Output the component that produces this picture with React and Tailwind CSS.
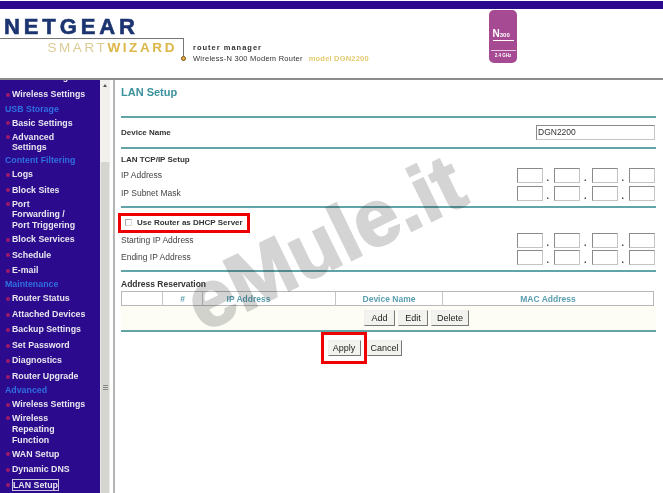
const font = "font-['Liberation_Sans',Arial,sans-serif]";

const menu = [
  { type: "item", label: "Wireless Settings" },
  { type: "head", label: "USB Storage" },
  { type: "item", label: "Basic Settings" },
  { type: "item", lines: ["Advanced", "Settings"] },
  { type: "head", label: "Content Filtering" },
  { type: "item", label: "Logs" },
  { type: "item", label: "Block Sites" },
  { type: "item", lines: ["Port", "Forwarding /", "Port Triggering"] },
  { type: "item", label: "Block Services" },
  { type: "item", label: "Schedule" },
  { type: "item", label: "E-mail" },
  { type: "head", label: "Maintenance" },
  { type: "item", label: "Router Status" },
  { type: "item", label: "Attached Devices" },
  { type: "item", label: "Backup Settings" },
  { type: "item", label: "Set Password" },
  { type: "item", label: "Diagnostics" },
  { type: "item", label: "Router Upgrade" },
  { type: "head", label: "Advanced" },
  { type: "item", label: "Wireless Settings" },
  { type: "item", lines: ["Wireless", "Repeating", "Function"] },
  { type: "item", label: "WAN Setup" },
  { type: "item", label: "Dynamic DNS" },
  { type: "item", label: "LAN Setup", active: true },
];

function Sidebar() {
  return (
    <div className="w-[100px] shrink-0 h-full bg-[#2c0a8e] overflow-hidden">
      <div className="mt-[-8px] pl-[12px] pr-[4px]">
        <div className="h-[15px] text-[8.8px] leading-[11px] font-bold text-[#e8e8f0]">ADSL Settings</div>
        {menu.map((m, i) =>
          m.type === "head" ? (
            <div key={i} className="h-[12.7px] -ml-[7px] text-[8.8px] leading-[12.7px] font-bold text-[#2f6fe0]">{m.label}</div>
          ) : m.lines ? (
            <div key={i} className="relative py-[1px] text-[8.8px] leading-[10.7px] font-bold text-[#e6e6ee]">
              <span className="absolute left-[-6px] top-[4px] w-[4px] h-[4px] rounded-full bg-[#a0186a]" />
              {m.lines.map((l) => <div key={l}>{l}</div>)}
            </div>
          ) : (
            <div key={i} className="relative h-[15.5px] py-[2.4px] text-[8.8px] leading-[10.7px] font-bold text-[#e6e6ee] whitespace-nowrap">
              <span className="absolute left-[-6px] top-[6px] w-[4px] h-[4px] rounded-full bg-[#a0186a]" />
              <span className={m.active ? "border border-[#c8c8d8]" : ""}>{m.label}</span>
            </div>
          )
        )}
      </div>
    </div>
  );
}

function Scrollbar() {
  return (
    <div className="w-[10px] shrink-0 h-full bg-[#f1f0ec] flex flex-col items-center">
      <div className="mt-[4px] w-0 h-0 border-x-[2.5px] border-x-transparent border-b-[3px] border-b-[#555]" />
      <div className="mt-[75px] w-full flex-1 bg-[#d6d6d0] border-x border-[#e8e8e4] flex items-center justify-center">
        <div className="flex flex-col gap-[1px] mt-[120px]">
          <div className="w-[5px] h-px bg-[#888]" />
          <div className="w-[5px] h-px bg-[#888]" />
          <div className="w-[5px] h-px bg-[#888]" />
        </div>
      </div>
    </div>
  );
}

function Hr() {
  return <div className="h-[2px] bg-[#4f9a9e] opacity-90" />;
}

function IpBox() {
  return <div className="w-[26px] h-[15px] bg-white border border-[#c4c4c4] border-t-[#8a8a8a] border-l-[#8a8a8a]" />;
}

function IpInput() {
  return (
    <div className="flex items-end gap-[4px] mr-[1px]">
      {[0, 1, 2, 3].map((n) => (
        <div key={n} className="flex items-end gap-[4px]">
          {n > 0 && <span className="text-[9px] leading-[9px] font-bold text-[#333] w-[3.5px]">.</span>}
          <IpBox />
        </div>
      ))}
    </div>
  );
}

function Btn({ children, w }) {
  return (
    <button className={`${w} h-[16px] bg-[#f2f2ee] text-[9px] leading-none text-[#222] border border-[#eeeeee] border-r-[#777] border-b-[#777]`}>
      {children}
    </button>
  );
}

function IpRow({ label, h = "h-[18px]" }) {
  return (
    <div className={`${h} flex items-center justify-between text-[8.5px] text-[#444]`}>
      <span>{label}</span>
      <IpInput />
    </div>
  );
}

function Content() {
  return (
    <div className="relative flex-1 h-full ml-[3px] border-l-2 border-[#b4b4b4] pl-[6px] pr-[7px] overflow-hidden">
      <h1 className="h-[36px] pt-[5px] text-[11px] leading-[14px] font-bold text-[#3a929c]">LAN Setup</h1>
      <Hr />
      <div className="h-[29px] flex items-center justify-between text-[8px] font-bold text-[#333]">
        <span>Device Name</span>
        <div className="w-[119px] h-[15px] mr-[1px] bg-white border border-[#c4c4c4] border-t-[#8a8a8a] border-l-[#8a8a8a] text-[8.5px] font-normal leading-[13px] text-[#333] pl-[1px]">DGN2200</div>
      </div>
      <Hr />
      <div className="h-[12px] mt-[5px] text-[8px] leading-[12px] font-bold text-[#333]">LAN TCP/IP Setup</div>
      <IpRow label="IP Address" />
      <IpRow label="IP Subnet Mask" />
      <div className="mt-[4px]"><Hr /></div>
      <div className="mt-[5px] -ml-[3px] w-[132px] h-[20px] border-[3px] border-[#ee0000] flex items-center pl-[4px] gap-[5px] text-[8px] font-bold text-[#333] whitespace-nowrap">
        <div className="w-[7px] h-[7px] shrink-0 border border-[#aaa] border-r-[#ddd] border-b-[#ddd] mb-[2px]" />
        <span>Use Router as DHCP Server</span>
      </div>
      <IpRow label="Starting IP Address" h="h-[15px]" />
      <IpRow label="Ending IP Address" />
      <div className="mt-[4px]"><Hr /></div>
      <div className="h-[12px] mt-[6px] text-[8.5px] leading-[12px] font-bold text-[#333]">Address Reservation</div>
      <div className="mt-[1px] h-[15px] mr-[2px] grid grid-cols-[41px_40px_133px_107px_1fr] border border-[#b8b8b8] text-[8.5px] font-bold text-[#5b9fb0] text-center leading-[14px]">
        <div className="border-r border-[#c4c4c4]" />
        <div className="border-r border-[#c4c4c4]">#</div>
        <div className="border-r border-[#c4c4c4] pr-[41px]">IP Address</div>
        <div className="border-r border-[#c4c4c4]">Device Name</div>
        <div>MAC Address</div>
      </div>
      <div className="h-[24px] flex items-center gap-[3px] pl-[243px] bg-[#fdfdf6]">
        <Btn w="w-[31px]">Add</Btn>
        <Btn w="w-[30px]">Edit</Btn>
        <Btn w="w-[38px]">Delete</Btn>
      </div>
      <Hr />
      <div className="flex items-center pl-[200px]">
        <div className="w-[46px] h-[32px] border-[3px] border-[#ee0000] flex items-center justify-center">
          <Btn w="w-[33px]">Apply</Btn>
        </div>
        <Btn w="w-[35px]">Cancel</Btn>
      </div>
      <div className="absolute left-[61px] top-[123px] -rotate-[26deg] text-[80px] leading-none font-bold text-[#d4d4d4] [-webkit-text-stroke:2px_#d4d4d4] mix-blend-multiply whitespace-nowrap pointer-events-none">
        eMule.it
      </div>
    </div>
  );
}

function Header() {
  return (
    <div className="h-[71px] flex border-b-2 border-[#8c8c8c] bg-white relative">
      <div className="w-[184px] shrink-0">
        <div className="h-[29px] pl-[4px] pt-[8px] text-[22px] leading-[20px] font-bold tracking-[3.9px] text-[#1c3470] [-webkit-text-stroke:0.6px_#1c3470]">NETGEAR</div>
        <div className="h-[18px] border-t border-r border-[#777] flex justify-end pr-[6px] pt-[2px] text-[13.5px] leading-[14px] whitespace-nowrap">
          <span className="tracking-[2.6px] text-[#dccb95]">SMART</span>
          <span className="font-bold tracking-[2.6px] text-[#dcb648]">WIZARD</span>
        </div>
        <div className="flex justify-end -mr-[2px]">
          <div className="w-[5px] h-[5px] rounded-full border border-[#7a4a10] bg-[#e0b040]" />
        </div>
      </div>
      <div className="pl-[9px] pt-[34px] flex flex-col">
        <div className="text-[7.5px] leading-[9px] font-bold tracking-[1px] text-[#333]">router manager</div>
        <div className="mt-[2px] flex gap-[6px] text-[7.5px] leading-[9px] whitespace-nowrap">
          <span className="text-[#333] tracking-[0.25px]">Wireless-N 300 Modem Router</span>
          <span className="text-[#e5cb70] font-bold tracking-[0.2px]">model DGN2200</span>
        </div>
      </div>
      <div className="absolute left-[489px] top-[1px] w-[28px] h-[53px] rounded-[5px] bg-[#a64a94] flex flex-col items-center text-white">
        <div className="mt-[19px] w-[21px] border-b border-white text-[10px] leading-[10px] font-bold whitespace-nowrap">N<span className="text-[6px]">300</span></div>
        <div className="mt-[9px] w-[25px] border-t border-[#e8c8e0] pt-[2px] text-center text-[4.5px] leading-[5px] font-bold whitespace-nowrap">2.4 GHz</div>
      </div>
    </div>
  );
}

export default function App() {
  return (
    <div className={`${font} w-[663px] h-[493px] bg-white overflow-hidden flex flex-col`}>
      <div className="h-[1px] bg-white" />
      <div className="h-[8px] bg-[#2c0a8e]" />
      <Header />
      <div className="flex-1 min-h-0 flex">
        <Sidebar />
        <Scrollbar />
        <Content />
      </div>
    </div>
  );
}
